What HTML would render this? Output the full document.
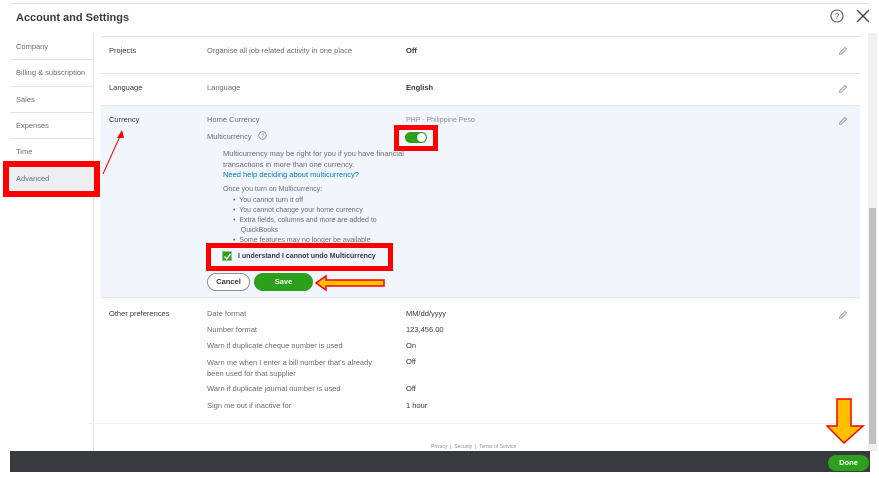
<!DOCTYPE html>
<html><head><meta charset="utf-8"><style>
*{margin:0;padding:0;box-sizing:border-box}
body{width:879px;height:478px;background:#fff;font-family:"Liberation Sans",sans-serif;position:relative;overflow:hidden;color:#6b6c72;font-size:7.5px}
.a{position:absolute;white-space:nowrap}
.hl{position:absolute;height:1px;background:#e3e5e8}
.b{color:#393a3d;font-weight:bold}
.d{color:#393a3d}
.pen{position:absolute;width:10px;height:10px}
</style></head><body>
<div class="hl" style="left:10px;top:3px;width:860px"></div>
<div class="a" style="left:16px;top:12px;font-size:11px;font-weight:bold;color:#393a3d">Account and Settings</div>
<svg class="a" style="left:830px;top:9px" width="14" height="14" viewBox="0 0 14 14"><circle cx="7" cy="7" r="6" fill="none" stroke="#555" stroke-width="1.1"/><text x="7" y="10" font-size="8" text-anchor="middle" fill="#555" font-family="Liberation Sans">?</text></svg>
<svg class="a" style="left:856px;top:9px" width="14" height="14" viewBox="0 0 14 14"><path d="M1 1L13 13M13 1L1 13" stroke="#444" stroke-width="1.4"/></svg>

<div class="a" style="left:93px;top:33px;width:1px;height:418px;background:#e3e5e8"></div>
<div class="a" style="left:16px;top:42px">Company</div>
<div class="hl" style="left:10px;top:59px;width:83px"></div>
<div class="a" style="left:16px;top:68px">Billing &amp; subscription</div>
<div class="hl" style="left:10px;top:86px;width:83px"></div>
<div class="a" style="left:16px;top:95px">Sales</div>
<div class="hl" style="left:10px;top:112px;width:83px"></div>
<div class="a" style="left:16px;top:121px">Expenses</div>
<div class="hl" style="left:10px;top:138px;width:83px"></div>
<div class="a" style="left:16px;top:147px">Time</div>
<div class="a" style="left:3px;top:161px;width:97px;height:36px;border:6px solid #f00;background:#eceef1"></div>
<div class="a" style="left:16px;top:174px">Advanced</div>

<div class="hl" style="left:101px;top:36px;width:759px"></div>
<div class="a d" style="left:109px;top:46px">Projects</div>
<div class="a" style="left:207px;top:46px">Organise all job-related activity in one place</div>
<div class="a b" style="left:406px;top:46px">Off</div>
<div class="hl" style="left:101px;top:73px;width:759px"></div>
<div class="a d" style="left:109px;top:83px">Language</div>
<div class="a" style="left:207px;top:83px">Language</div>
<div class="a b" style="left:406px;top:83px">English</div>
<div class="a" style="left:101px;top:105px;width:759px;height:193px;background:#f1f6fd;border-top:1px solid #e3e5e8;border-bottom:1px solid #e3e5e8"></div>
<div class="a d" style="left:109px;top:115px">Currency</div>
<div class="a" style="left:207px;top:115px">Home Currency</div>
<div class="a" style="left:406px;top:117px;font-size:7px;color:#8d9096">PHP - Philippine Peso</div>
<div class="a" style="left:207px;top:132px">Multicurrency</div>
<svg class="a" style="left:258px;top:131px" width="9" height="9" viewBox="0 0 9 9"><circle cx="4.5" cy="4.5" r="3.8" fill="none" stroke="#888" stroke-width=".8"/><text x="4.5" y="7" font-size="6" text-anchor="middle" fill="#888" font-family="Liberation Sans">?</text></svg>
<div class="a" style="left:394px;top:125px;width:44px;height:26px;border:5px solid #f00"></div>
<div class="a" style="left:405px;top:132px;width:22px;height:11px;border-radius:6px;background:#2ca01c"></div>
<div class="a" style="left:417px;top:133px;width:9px;height:9px;border-radius:5px;background:#fff"></div>
<div class="a" style="left:223px;top:148px;line-height:11px">Multicurrency may be right for you if you have financial<br>transactions in more than one currency.</div>
<div class="a" style="left:223px;top:170px;color:#0077c5">Need help deciding about multicurrency?</div>
<div class="a" style="left:223px;top:186px;font-size:7px">Once you turn on Multicurrency:</div>
<div class="a" style="left:233px;top:196px;font-size:7px;line-height:10px">•&nbsp; You cannot turn it off<br>•&nbsp; You cannot change your home currency<br>•&nbsp; Extra fields, columns and more are added to<br>&nbsp;&nbsp;&nbsp; QuickBooks<br>•&nbsp; Some features may no longer be available</div>
<div class="a" style="left:206px;top:243px;width:187px;height:28px;border:5px solid #f00;background:#f1f6fd"></div>
<div class="a" style="left:222px;top:251px;width:10px;height:10px;background:#2ca01c;border:1px solid #8fc98a"></div>
<svg class="a" style="left:223px;top:252px" width="9" height="9" viewBox="0 0 9 9"><path d="M1.5 4.5L3.7 6.8L7.6 2" stroke="#fff" stroke-width="1.4" fill="none"/></svg>
<div class="a b" style="left:238px;top:253px;font-size:7px">I understand I cannot undo Multicurrency</div>
<div class="a d" style="left:207px;top:273px;width:43px;height:18px;border:1px solid #8d9096;border-radius:9px;text-align:center;line-height:16px;font-weight:bold;background:#fff">Cancel</div>
<div class="a" style="left:254px;top:273px;width:59px;height:18px;border-radius:9px;background:#2ca01c;color:#fff;text-align:center;line-height:18px;font-weight:bold">Save</div>
<svg class="a" style="left:314px;top:274px" width="72" height="18" viewBox="0 0 72 18"><path d="M2 9L12 2V6H70V12H12V16Z" fill="#ffc000" stroke="#f00" stroke-width="1.5"/></svg>
<svg class="a" style="left:100px;top:128px" width="26" height="48" viewBox="0 0 26 48"><path d="M3 46L21 6" stroke="#f00" stroke-width="1"/><path d="M22 2L17 10L24 10Z" fill="#f00"/></svg>

<div class="a d" style="left:109px;top:309px">Other preferences</div>
<div class="a" style="left:207px;top:309px">Date format</div><div class="a d" style="left:406px;top:309px">MM/dd/yyyy</div>
<div class="a" style="left:207px;top:325px">Number format</div><div class="a d" style="left:406px;top:325px">123,456.00</div>
<div class="a" style="left:207px;top:341px">Warn if duplicate cheque number is used</div><div class="a d" style="left:406px;top:341px">On</div>
<div class="a" style="left:207px;top:357px;line-height:11px">Warn me when I enter a bill number that's already<br>been used for that supplier</div><div class="a d" style="left:406px;top:357px">Off</div>
<div class="a" style="left:207px;top:384px">Warn if duplicate journal number is used</div><div class="a d" style="left:406px;top:384px">Off</div>
<div class="a" style="left:207px;top:401px">Sign me out if inactive for</div><div class="a d" style="left:406px;top:401px">1 hour</div>
<div class="hl" style="left:88px;top:423px;width:772px;background:#eef0f3"></div>
<div class="a" style="left:431px;top:444px;font-size:5px;color:#8d9096">Privacy &nbsp;|&nbsp; Security &nbsp;|&nbsp; Terms of Service</div>

<svg class="pen" style="left:838px;top:46px" viewBox="0 0 10 10"><path d="M1.5 8.5L2 6.5L7 1.5L8.5 3L3.5 8Z" fill="none" stroke="#8d9096" stroke-width=".8"/></svg>
<svg class="pen" style="left:838px;top:84px" viewBox="0 0 10 10"><path d="M1.5 8.5L2 6.5L7 1.5L8.5 3L3.5 8Z" fill="none" stroke="#8d9096" stroke-width=".8"/></svg>
<svg class="pen" style="left:838px;top:116px" viewBox="0 0 10 10"><path d="M1.5 8.5L2 6.5L7 1.5L8.5 3L3.5 8Z" fill="none" stroke="#8d9096" stroke-width=".8"/></svg>
<svg class="pen" style="left:838px;top:310px" viewBox="0 0 10 10"><path d="M1.5 8.5L2 6.5L7 1.5L8.5 3L3.5 8Z" fill="none" stroke="#8d9096" stroke-width=".8"/></svg>

<div class="a" style="left:868px;top:33px;width:9px;height:418px;background:#f1f1f1"></div>
<div class="a" style="left:869px;top:208px;width:7px;height:236px;background:#c1c1c1"></div>
<svg class="a" style="left:826px;top:398px" width="42" height="46" viewBox="0 0 42 46"><path d="M11 1H25V28H37L18 45L1 28H11Z" fill="#ffc000" stroke="#f00" stroke-width="1.5"/></svg>

<div class="a" style="left:10px;top:451px;width:860px;height:21px;background:#393a3d"></div>
<div class="a" style="left:828px;top:455px;width:41px;height:16px;border-radius:8px;background:#2ca01c;color:#fff;font-weight:bold;text-align:center;line-height:16px">Done</div>
</body></html>
